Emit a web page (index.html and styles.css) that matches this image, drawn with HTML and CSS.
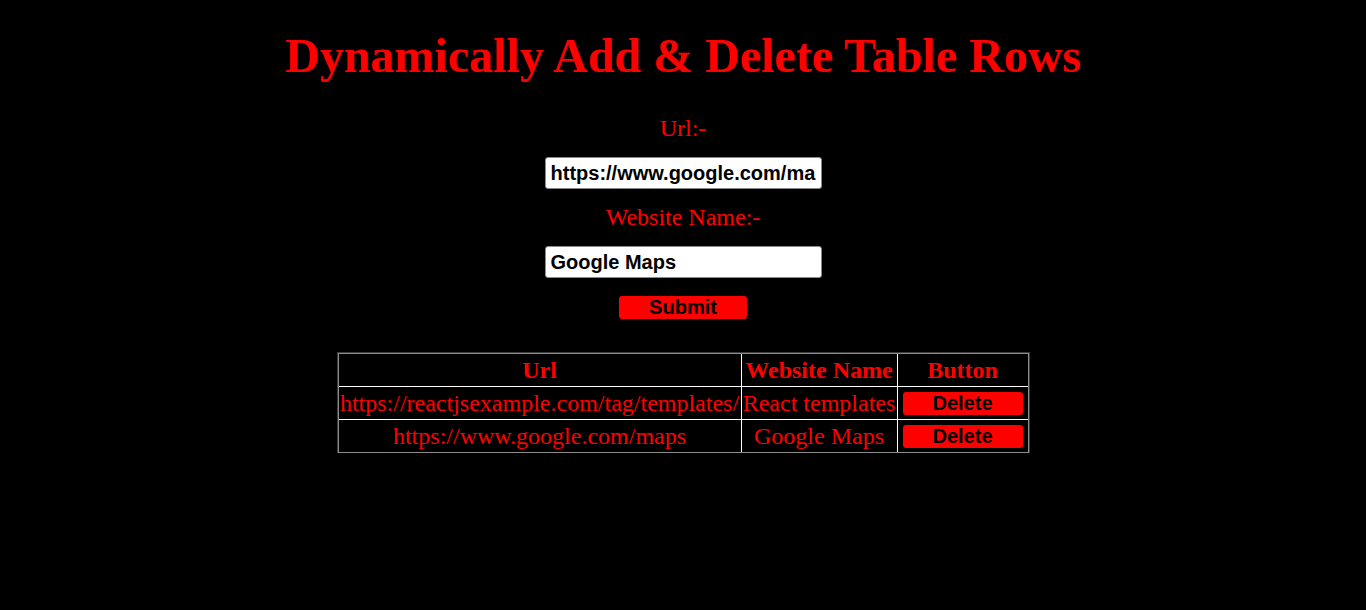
FILE: index.html
```html
<!DOCTYPE html>
<html>
<head>
<meta charset="utf-8">
<link rel="stylesheet" href="styles.css">
</head>
<body>
<div class="app">
  <h1 class="title">Dynamically Add &amp; Delete Table Rows</h1>
  <form class="form">
    <label class="label">Url:-</label>
    <input class="field" type="text" value="https://www.google.com/maps">
    <label class="label">Website Name:-</label>
    <input class="field" type="text" value="Google Maps">
    <button class="btn submit" type="button">Submit</button>
  </form>
  <table class="sites">
    <thead>
      <tr><th class="c-url">Url</th><th class="c-name">Website Name</th><th class="c-btn">Button</th></tr>
    </thead>
    <tbody>
      <tr><td>https://reactjsexample.com/tag/templates/</td><td>React templates</td><td><button class="btn del" type="button">Delete</button></td></tr>
      <tr><td>https://www.google.com/maps</td><td>Google Maps</td><td><button class="btn del" type="button">Delete</button></td></tr>
    </tbody>
  </table>
</div>
</body>
</html>
```
FILE: styles.css
```css
html, body {
  margin: 0;
  padding: 0;
  background: #000;
}
body {
  font-family: "Liberation Serif", "Times New Roman", serif;
  color: #ff0000;
}
.app {
  display: flex;
  flex-direction: column;
  align-items: center;
  padding-top: 28px;
}
.title {
  margin: 0;
  font-size: 48px;
  line-height: 56px;
  font-weight: bold;
  color: #ff0000;
}
.form {
  display: flex;
  flex-direction: column;
  align-items: center;
  margin-top: 30px;
}
.label {
  font-size: 24px;
  line-height: 28px;
  color: #ff0000;
}
.field {
  box-sizing: border-box;
  width: 277px;
  height: 32px;
  margin: 15px 0 14px;
  padding: 0 5px;
  border: 1px solid #8a8a8a;
  border-radius: 3px;
  background: #fff;
  font-family: "Liberation Sans", Arial, sans-serif;
  font-size: 20px;
  font-weight: bold;
  color: #000;
}
.field:last-of-type {
  margin-bottom: 18px;
}
.btn {
  box-sizing: border-box;
  border: none;
  border-radius: 3px;
  background: #ff0000;
  color: #000;
  font-family: "Liberation Sans", Arial, sans-serif;
  font-weight: bold;
  font-size: 20px;
  line-height: 23px;
  padding: 0;
}
.submit {
  width: 128px;
  height: 23px;
}
.sites {
  margin-top: 34px;
  border-collapse: separate;
  border-spacing: 0;
  border: 1px solid #8c8c8c;
  outline: 1px solid #3c3c3c;
  font-size: 24px;
}
.sites th, .sites td {
  box-sizing: border-box;
  border: 0;
  border-right: 1px solid #fff;
  border-bottom: 1px solid #fff;
  padding: 0;
  height: 33px;
  text-align: center;
  white-space: nowrap;
}
.sites th:last-child, .sites td:last-child {
  border-right: 0;
}
.sites tbody tr:last-child td {
  border-bottom: 0;
  height: 32px;
}
.sites th {
  font-weight: bold;
}
.c-url {
  width: 403px;
}
.c-name {
  width: 156px;
}
.c-btn {
  width: 130px;
}
.del {
  width: 120px;
  height: 23px;
  display: block;
  margin: 0 auto;
}
```
